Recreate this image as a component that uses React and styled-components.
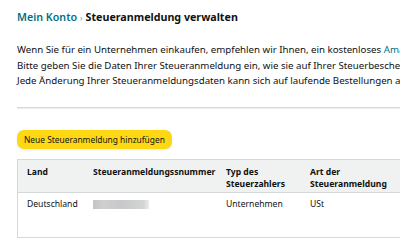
import React from "react";
import styled, { createGlobalStyle } from "styled-components";

const Global = createGlobalStyle`
  html, body { margin: 0; padding: 0; background: #fff; overflow: hidden; }
  body { font-family: "Noto Sans", "Open Sans", Arial, sans-serif; color: #0f1111; }
`;

const Page = styled.div`
  width: 760px;
  padding: 9px 0 0 17px;
  box-sizing: border-box;
`;

const Title = styled.h1`
  margin: 0;
  font-size: 10.7px;
  line-height: 16px;
  font-weight: 700;
  white-space: nowrap;
  display: flex;
  align-items: baseline;
  gap: 3px;
`;

const Crumb = styled.span`
  color: #007185;
  font-weight: 600;
`;

const Sep = styled.span`
  color: #8b8b8b;
  font-size: 8px;
  font-weight: 400;
`;

const Intro = styled.div`
  margin-top: 16px;
  font-size: 9.7px;
  line-height: 15.5px;
  white-space: nowrap;
`;

const Link = styled.span`
  color: #007185;
`;

const Divider = styled.div`
  margin-top: 18px;
  height: 1px;
  background: #d5d9d9;
  box-shadow: 0 1px 0 #eceeee;
`;

const Button = styled.button`
  margin-top: 22px;
  height: 19px;
  padding: 0 7px;
  border: none;
  border-radius: 7px;
  background: #ffd814;
  color: #0f1111;
  font-family: inherit;
  font-size: 8.4px;
  line-height: 19px;
  display: block;
  box-shadow: 0 1px 2px rgba(213, 217, 217, 0.5);
`;

const Table = styled.div`
  margin-top: 10px;
  border: 1px solid #d5d9d9;
  border-right: none;
  display: grid;
  grid-template-columns: 66px 133px 84px 1fr;
`;

const HeadCell = styled.div`
  background: #f0f2f2;
  border-bottom: 1px solid #d5d9d9;
  height: 33px;
  padding: 6px 0 0 9px;
  box-sizing: border-box;
  font-size: 8.6px;
  line-height: 12px;
  font-weight: 700;
`;

const Cell = styled.div`
  height: 44px;
  padding: 5px 0 0 9px;
  box-sizing: border-box;
  font-size: 8.6px;
  line-height: 12px;
`;

const Blurred = styled.div`
  margin-top: 2px;
  width: 56px;
  height: 9px;
  background: linear-gradient(90deg, #c4c4c6 0%, #cfcfcf 20%, #c9c7ca 50%, #cccecf 70%, #d4d4d4 90%, #ececec 100%);
  filter: blur(0.5px);
`;

export default function App() {
  return (
    <>
      <Global />
      <Page>
        <Title>
          <Crumb>Mein Konto</Crumb>
          <Sep>›</Sep>
          <span>Steueranmeldung verwalten</span>
        </Title>
        <Intro>
          <div>
            Wenn Sie für ein Unternehmen einkaufen, empfehlen wir Ihnen, ein kostenloses <Link>Amazon Business-Konto</Link> zu erstellen.
          </div>
          <div>
            Bitte geben Sie die Daten Ihrer Steueranmeldung ein, wie sie auf Ihrer Steuerbescheinigung angegeben sind.
          </div>
          <div>
            Jede Änderung Ihrer Steueranmeldungsdaten kann sich auf laufende Bestellungen auswirken.
          </div>
        </Intro>
        <Divider />
        <Button>Neue Steueranmeldung hinzufügen</Button>
        <Table>
          <HeadCell>Land</HeadCell>
          <HeadCell>Steueranmeldungssnummer</HeadCell>
          <HeadCell>Typ des<br />Steuerzahlers</HeadCell>
          <HeadCell>Art der<br />Steueranmeldung</HeadCell>
          <Cell>Deutschland</Cell>
          <Cell><Blurred /></Cell>
          <Cell>Unternehmen</Cell>
          <Cell>USt</Cell>
        </Table>
      </Page>
    </>
  );
}
